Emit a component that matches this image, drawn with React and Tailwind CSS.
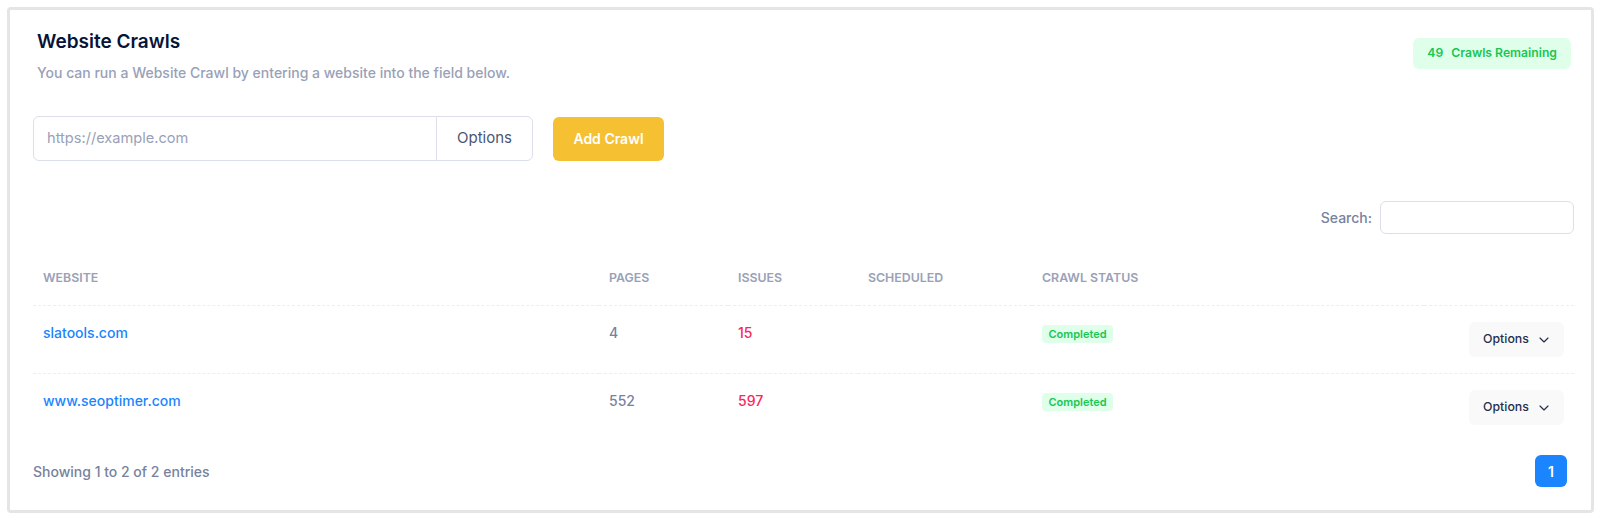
import { ChevronDown } from 'lucide-react';

const rows = [
  { site: 'slatools.com', pages: '4', issues: '15', scheduled: '', status: 'Completed' },
  { site: 'www.seoptimer.com', pages: '552', issues: '597', scheduled: '', status: 'Completed' },
];

export default function App() {
  return (
    <div className="min-h-screen bg-white p-[7px] font-['Inter',sans-serif]">
      <div className="h-[506px] rounded-[4px] border-[3px] border-[#e5e5e5] bg-white">
        {/* Header */}
        <div className="flex items-start justify-between pl-[27px] pr-[20px] pt-[21px]">
          <div>
            <h3 className="text-[19px] font-semibold leading-[21px] text-[#071437]">Website Crawls</h3>
            <p className="mt-[10px] text-[14px] font-medium leading-[21px] text-[#99a1b7]">
              You can run a Website Crawl by entering a website into the field below.
            </p>
          </div>
          <div className="mt-[7px] flex h-[31px] items-center gap-2 rounded-[6px] bg-[#dfffea] px-[14px] text-[12.2px] font-semibold text-[#17c653]">
            <span>49</span>
            <span>Crawls Remaining</span>
          </div>
        </div>

        <div className="pl-[23px] pr-[17px]">
          {/* Add crawl form */}
          <div className="mt-[33px] flex items-center gap-[20px]">
            <div className="flex h-[45px] w-[500px] rounded-[6px] border border-[#dbdfe9]">
              <input
                type="text"
                placeholder="https://example.com"
                className="min-w-0 flex-1 rounded-l-[6px] bg-transparent px-[13px] text-[14.6px] text-[#4b5675] outline-none placeholder:text-[#99a1b7]"
              />
              <div className="flex w-[96px] items-center justify-center border-l border-[#dbdfe9] text-[15px] text-[#4b5675]">
                Options
              </div>
            </div>
            <button className="h-[44px] w-[111px] rounded-[6px] bg-[#f5c132] text-[14px] font-semibold text-white">
              Add Crawl
            </button>
          </div>

          {/* Search */}
          <div className="mt-[40px] flex items-center justify-end gap-2">
            <label className="text-[14px] font-medium text-[#78829d]">Search:</label>
            <input
              type="search"
              className="h-[33px] w-[194px] rounded-[6px] border border-[#dbdfe9] px-3 text-[14px] outline-none"
            />
          </div>

          {/* Table */}
          <table className="mt-[35px] w-full table-fixed">
            <colgroup>
              <col className="w-[566px]" />
              <col className="w-[129px]" />
              <col className="w-[130px]" />
              <col className="w-[174px]" />
              <col />
              <col className="w-[150px]" />
            </colgroup>
            <thead>
              <tr className="border-b border-dashed border-[#eeeef2] text-left text-[12.35px] font-semibold uppercase leading-[18px] text-[#99a1b7]">
                <th className="px-[10px] pb-[18px] font-semibold">Website</th>
                <th className="px-[10px] pb-[18px] font-semibold">Pages</th>
                <th className="px-[10px] pb-[18px] font-semibold">Issues</th>
                <th className="px-[10px] pb-[18px] font-semibold">Scheduled</th>
                <th className="px-[10px] pb-[18px] font-semibold">Crawl Status</th>
                <th className="px-[10px] pb-[18px]"></th>
              </tr>
            </thead>
            <tbody>
              {rows.map((r, i) => (
                <tr
                  key={r.site}
                  className={i < rows.length - 1 ? 'border-b border-dashed border-[#eeeef2]' : ''}
                >
                  <td className="px-[10px] py-[16px] align-top text-[14px] font-medium leading-[21px]">
                    <a href="#" className="text-[#1b84ff]">{r.site}</a>
                  </td>
                  <td className="px-[10px] py-[16px] align-top text-[14px] font-medium leading-[21px] text-[#78829d]">
                    {r.pages}
                  </td>
                  <td className="px-[10px] py-[16px] align-top text-[14px] font-medium leading-[21px] text-[#f8285a]">
                    {r.issues}
                  </td>
                  <td className="px-[10px] py-[16px] align-top text-[14px] leading-[21px]">{r.scheduled}</td>
                  <td className="px-[10px] py-[16px] align-top">
                    <div className="flex h-[23px] items-center">
                      <span className="rounded-[4px] bg-[#dfffea] px-[6.5px] py-[3px] text-[11px] font-semibold leading-[12px] text-[#17c653]">
                        {r.status}
                      </span>
                    </div>
                  </td>
                  <td className="px-[10px] py-[16px] align-top">
                    <div className="flex justify-end">
                      <button className="flex h-[35px] w-[95px] items-center gap-[7px] rounded-[6px] bg-[#f9f9f9] pl-[14px] text-[12.35px] font-medium text-[#252f4a]">
                        Options
                        <ChevronDown size={16} strokeWidth={1.75} />
                      </button>
                    </div>
                  </td>
                </tr>
              ))}
            </tbody>
          </table>

          {/* Footer */}
          <div className="mt-[14px] flex items-center justify-between">
            <span className="text-[14px] font-medium text-[#78829d]">Showing 1 to 2 of 2 entries</span>
            <button className="mr-[7px] flex h-[32px] w-[32px] items-center justify-center rounded-[6px] bg-[#1b84ff] text-[14px] font-semibold text-white">
              1
            </button>
          </div>
        </div>
      </div>
    </div>
  );
}
